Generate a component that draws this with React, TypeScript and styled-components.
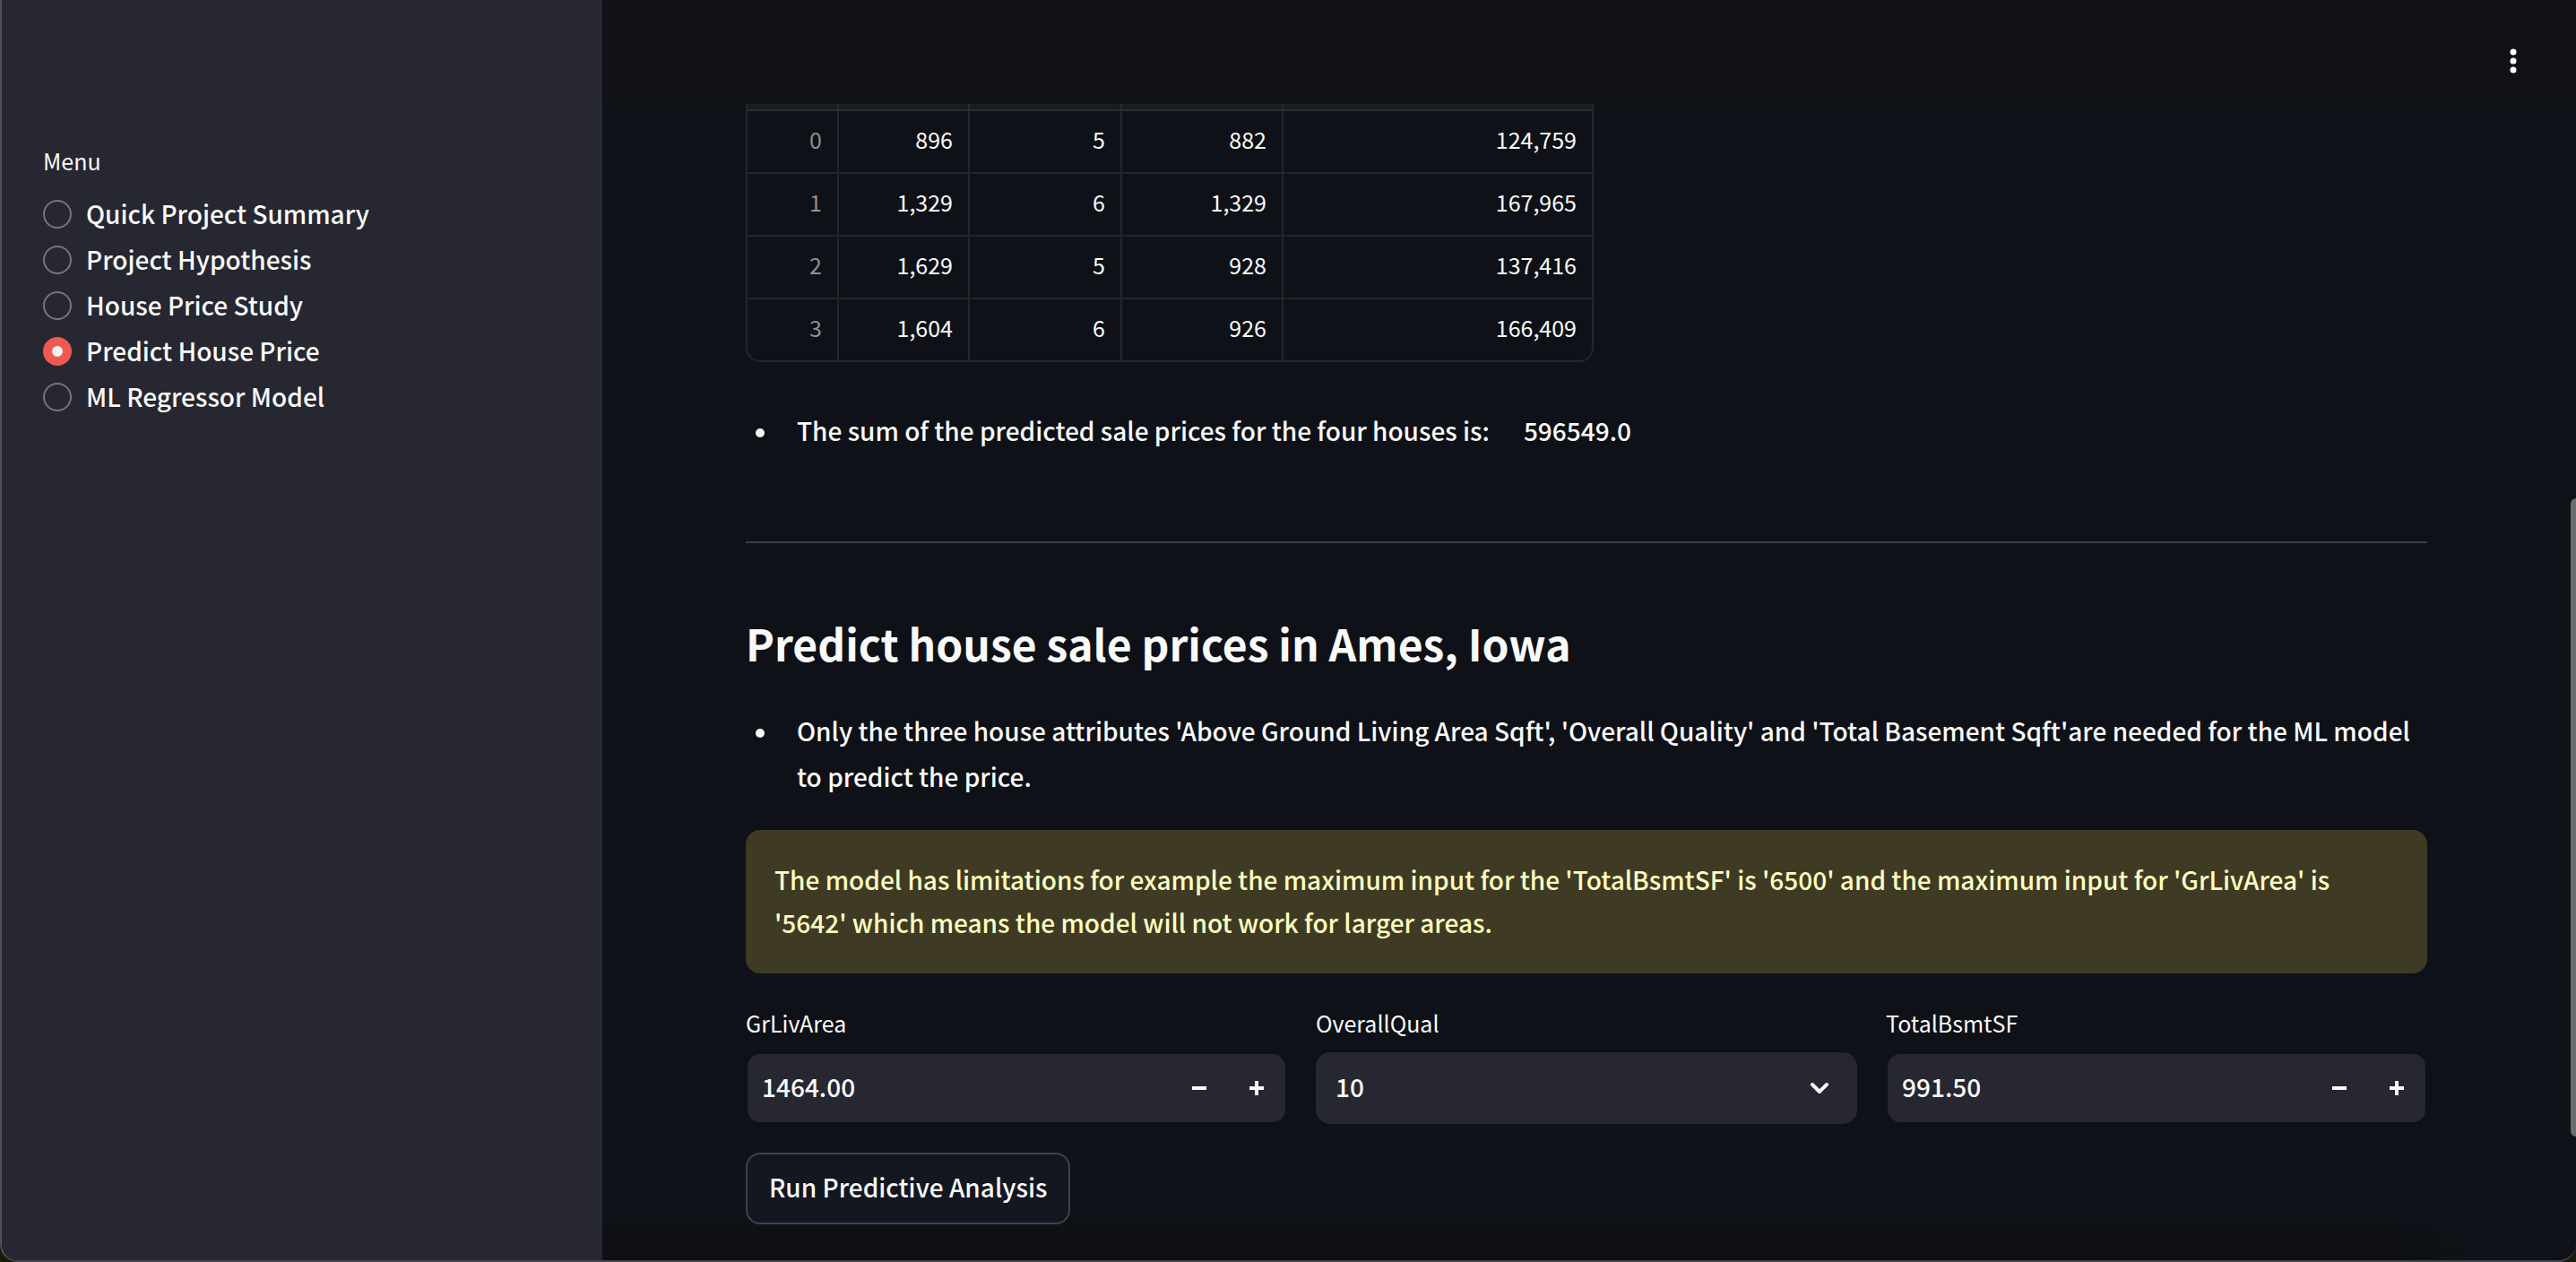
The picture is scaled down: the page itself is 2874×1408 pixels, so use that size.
import React, { useState } from "react";
import styled, { createGlobalStyle } from "styled-components";

const font = `"Noto Sans CJK JP", "Noto Sans", sans-serif`;
const ink = "#fafafa";

const GlobalStyle = createGlobalStyle`
  *, *::before, *::after { box-sizing: border-box; }
  html, body, #root { height: 100%; }
  body {
    margin: 0;
    overflow: hidden;
    background: #1b1a08;
    color: ${ink};
    font-family: ${font};
    font-size: 28px;
    font-weight: 500;
    line-height: 51px;
  }
  button, input, select { font: inherit; color: inherit; }
`;

const Window = styled.div`
  position: relative;
  display: flex;
  height: 100vh;
  overflow: hidden;
  background: #0e1117;
  border-left: 2px solid #505156;
  border-bottom: 2px solid #44454a;
  border-radius: 0 0 20px 20px;
`;

const Sidebar = styled.aside`
  flex: 0 0 670px;
  padding: 159px 46px 0;
  background: #262730;
`;

const Menu = styled.fieldset`
  margin: 0;
  padding: 0;
  border: 0;
`;

const MenuTitle = styled.legend`
  padding: 0;
  margin-bottom: 14px;
  font-size: 25px;
  font-weight: 400;
  line-height: 40px;
`;

const MenuItem = styled.label`
  display: flex;
  align-items: center;
  gap: 16px;
  height: 51px;
  cursor: pointer;
`;

const MenuText = styled.span`
  padding-bottom: 1px;
`;

const Radio = styled.input`
  appearance: none;
  flex: none;
  width: 32px;
  height: 32px;
  margin: 0;
  border: 2px solid #75767b;
  border-radius: 50%;
  background: #262730;
  &:checked {
    border: 10px solid #ee5a52;
    background: #f0f2f6;
  }
`;

const Main = styled.main`
  flex: 1;
  min-width: 0;
  display: flex;
  flex-direction: column;
`;

const TopBar = styled.header`
  display: flex;
  justify-content: flex-end;
  align-items: flex-start;
  flex: 0 0 116px;
  padding: 48px 60px 0;
  background: #111216;
`;

const IconButton = styled.button`
  display: flex;
  align-items: center;
  justify-content: center;
  width: 20px;
  height: 40px;
  padding: 0;
  border: 0;
  background: none;
`;

const Content = styled.div`
  flex: 1;
  padding: 0 166px 0 160px;
`;

const TableFrame = styled.div`
  width: 946px;
  max-width: 100%;
  border: 2px solid #24262a;
  border-top: 0;
  border-radius: 0 0 16px 16px;
  overflow: hidden;
`;

const Table = styled.table`
  width: 100%;
  table-layout: fixed;
  border-spacing: 0;
  font-size: 25px;
  font-weight: 400;
  line-height: 40px;
  text-align: right;
`;

const HeadCell = styled.th`
  height: 8px;
  padding: 0;
  background: #1a1c24;
  border-bottom: 2px solid #2a2c31;
  border-right: 2px solid #2a2c31;
  &:last-child { border-right: 0; }
`;

const Cell = styled.td<{ $muted?: boolean }>`
  height: 70px;
  padding: 0 17px 6px;
  color: ${(p) => (p.$muted ? "#8e8f93" : ink)};
  border-bottom: 2px solid #24262a;
  border-right: 2px solid #24262a;
  &:last-child { border-right: 0; }
  tr:last-child > & { border-bottom: 0; height: 68px; }
`;

const Bullets = styled.ul<{ $top: number; $bottom: number }>`
  margin: ${(p) => p.$top}px 0 ${(p) => p.$bottom}px;
  padding: 0;
  list-style: none;
`;

const Bullet = styled.li`
  display: flex;
  padding-left: 11px;
  &::before {
    content: "";
    flex: none;
    width: 10px;
    height: 10px;
    margin: 23px 36px 0 0;
    border-radius: 50%;
    background: ${ink};
  }
`;

const Total = styled.span`
  margin-left: 38px;
`;

const Rule = styled.hr`
  height: 2px;
  margin: 0 0 78px;
  border: 0;
  background: #3e3f43;
`;

const Title = styled.h2`
  margin: 0;
  font-size: 48px;
  font-weight: 700;
  line-height: 67px;
`;

const Warning = styled.div`
  padding: 31px 32px 33px;
  border-radius: 16px;
  background: #3f3a24;
  color: #ffffc2;
  line-height: 48px;
`;

const Fields = styled.div`
  display: grid;
  grid-template-columns: repeat(3, 1fr);
  gap: 32px;
  margin: 35px 0 32px;
`;

const FieldLabel = styled.label`
  display: block;
  margin-bottom: 13px;
  font-size: 25px;
  font-weight: 400;
  line-height: 40px;
`;

const NumberBox = styled.div`
  display: flex;
  height: 80px;
  border: 2px solid #101114;
  border-radius: 16px;
  background: #262730;
  overflow: hidden;
`;

const NumberInput = styled.input`
  flex: 1;
  min-width: 0;
  padding: 0 16px 3px;
  border: 0;
  outline: 0;
  background: none;
`;

const StepButton = styled.button`
  display: flex;
  align-items: center;
  justify-content: center;
  width: 64px;
  padding: 0;
  border: 0;
  background: none;
`;

const SelectBox = styled.div`
  display: grid;
  align-items: center;
  height: 80px;
  border-radius: 16px;
  background: #262730;
  > * { grid-area: 1 / 1; }
  > svg { justify-self: end; margin-right: 30px; pointer-events: none; }
`;

const Select = styled.select`
  appearance: none;
  width: 100%;
  height: 80px;
  padding: 0 22px 3px;
  border: 0;
  border-radius: 16px;
  outline: 0;
  background: none;
`;

const RunButton = styled.button`
  height: 80px;
  padding: 0 24px 3px;
  border: 2px solid #41434a;
  border-radius: 16px;
  background: #131720;
`;

const BottomShade = styled.div`
  position: absolute;
  right: 0;
  bottom: 0;
  left: 670px;
  height: 38px;
  background: linear-gradient(90deg, #0f1013 86%, transparent 95%);
`;

const ScrollThumb = styled.div`
  position: absolute;
  top: 556px;
  right: 0;
  width: 6px;
  height: 712px;
  border-radius: 6px 0 0 6px;
  background: #6b6b6d;
`;

const pages = [
  "Quick Project Summary",
  "Project Hypothesis",
  "House Price Study",
  "Predict House Price",
  "ML Regressor Model",
];

const columns = [
  { name: "Index", width: 102 },
  { name: "GrLivArea", width: 146 },
  { name: "OverallQual", width: 170 },
  { name: "TotalBsmtSF", width: 180 },
  { name: "Predicted SalePrice", width: 344 },
];

const houses = [
  ["0", "896", "5", "882", "124,759"],
  ["1", "1,329", "6", "1,329", "167,965"],
  ["2", "1,629", "5", "928", "137,416"],
  ["3", "1,604", "6", "926", "166,409"],
];

function NumberField({ name, initial, step }: { name: string; initial: number; step: number }) {
  const [text, setText] = useState(initial.toFixed(2));
  const shift = (d: number) => setText(((parseFloat(text) || 0) + d).toFixed(2));
  return (
    <div>
      <FieldLabel htmlFor={name}>{name}</FieldLabel>
      <NumberBox>
        <NumberInput id={name} inputMode="decimal" value={text} onChange={(e) => setText(e.target.value)} />
        <StepButton type="button" aria-label={`Decrease ${name}`} onClick={() => shift(-step)}>
          <svg width="16" height="16" viewBox="0 0 16 16" fill={ink}>
            <path d="M0 6h16v4H0z" />
          </svg>
        </StepButton>
        <StepButton type="button" aria-label={`Increase ${name}`} onClick={() => shift(step)}>
          <svg width="16" height="16" viewBox="0 0 16 16" fill={ink}>
            <path d="M0 6h6V0h4v6h6v4h-6v6H6v-6H0z" />
          </svg>
        </StepButton>
      </NumberBox>
    </div>
  );
}

export default function App() {
  const [page, setPage] = useState(pages[3]);
  const [quality, setQuality] = useState("10");
  return (
    <>
      <GlobalStyle />
      <Window>
        <Sidebar>
          <Menu>
            <MenuTitle>Menu</MenuTitle>
            {pages.map((p) => (
              <MenuItem key={p}>
                <Radio type="radio" name="page" checked={p === page} onChange={() => setPage(p)} />
                <MenuText>{p}</MenuText>
              </MenuItem>
            ))}
          </Menu>
        </Sidebar>
        <Main>
          <TopBar>
            <IconButton type="button" aria-label="Main menu">
              <svg width="8" height="28" viewBox="0 0 8 28" fill="#fff">
                <circle cx="4" cy="4" r="3.5" />
                <circle cx="4" cy="14" r="3.5" />
                <circle cx="4" cy="24" r="3.5" />
              </svg>
            </IconButton>
          </TopBar>
          <Content>
            <TableFrame>
              <Table>
                <colgroup>
                  {columns.map((c) => (
                    <col key={c.name} width={c.width} />
                  ))}
                </colgroup>
                <thead>
                  <tr>
                    {columns.map((c) => (
                      <HeadCell key={c.name} scope="col" aria-label={c.name} />
                    ))}
                  </tr>
                </thead>
                <tbody>
                  {houses.map((row) => (
                    <tr key={row[0]}>
                      {row.map((value, i) => (
                        <Cell key={i} $muted={i === 0}>{value}</Cell>
                      ))}
                    </tr>
                  ))}
                </tbody>
              </Table>
            </TableFrame>
            <Bullets $top={51} $bottom={98}>
              <Bullet>
                <span>
                  The sum of the predicted sale prices for the four houses is:
                  <Total>596549.0</Total>
                </span>
              </Bullet>
            </Bullets>
            <Rule />
            <Title>Predict house sale prices in Ames, Iowa</Title>
            <Bullets $top={39} $bottom={34}>
              <Bullet>
                <span>
                  Only the three house attributes 'Above Ground Living Area Sqft', 'Overall Quality' and 'Total
                  Basement Sqft'are needed for the ML model to predict the price.
                </span>
              </Bullet>
            </Bullets>
            <Warning role="alert">
              The model has limitations for example the maximum input for the 'TotalBsmtSF' is '6500' and the
              maximum input for 'GrLivArea' is '5642' which means the model will not work for larger areas.
            </Warning>
            <Fields>
              <NumberField name="GrLivArea" initial={1464} step={1} />
              <div>
                <FieldLabel htmlFor="OverallQual">OverallQual</FieldLabel>
                <SelectBox>
                  <Select id="OverallQual" value={quality} onChange={(e) => setQuality(e.target.value)}>
                    {["10", "9", "8", "7", "6", "5", "4", "3", "2", "1"].map((q) => (
                      <option key={q}>{q}</option>
                    ))}
                  </Select>
                  <svg width="24" height="16" viewBox="0 0 24 16" fill="none" stroke={ink} strokeWidth="4" strokeLinecap="round" strokeLinejoin="round">
                    <path d="M4 4l8 8 8-8" />
                  </svg>
                </SelectBox>
              </div>
              <NumberField name="TotalBsmtSF" initial={991.5} step={1} />
            </Fields>
            <RunButton type="button">Run Predictive Analysis</RunButton>
          </Content>
        </Main>
        <BottomShade />
        <ScrollThumb />
      </Window>
    </>
  );
}
